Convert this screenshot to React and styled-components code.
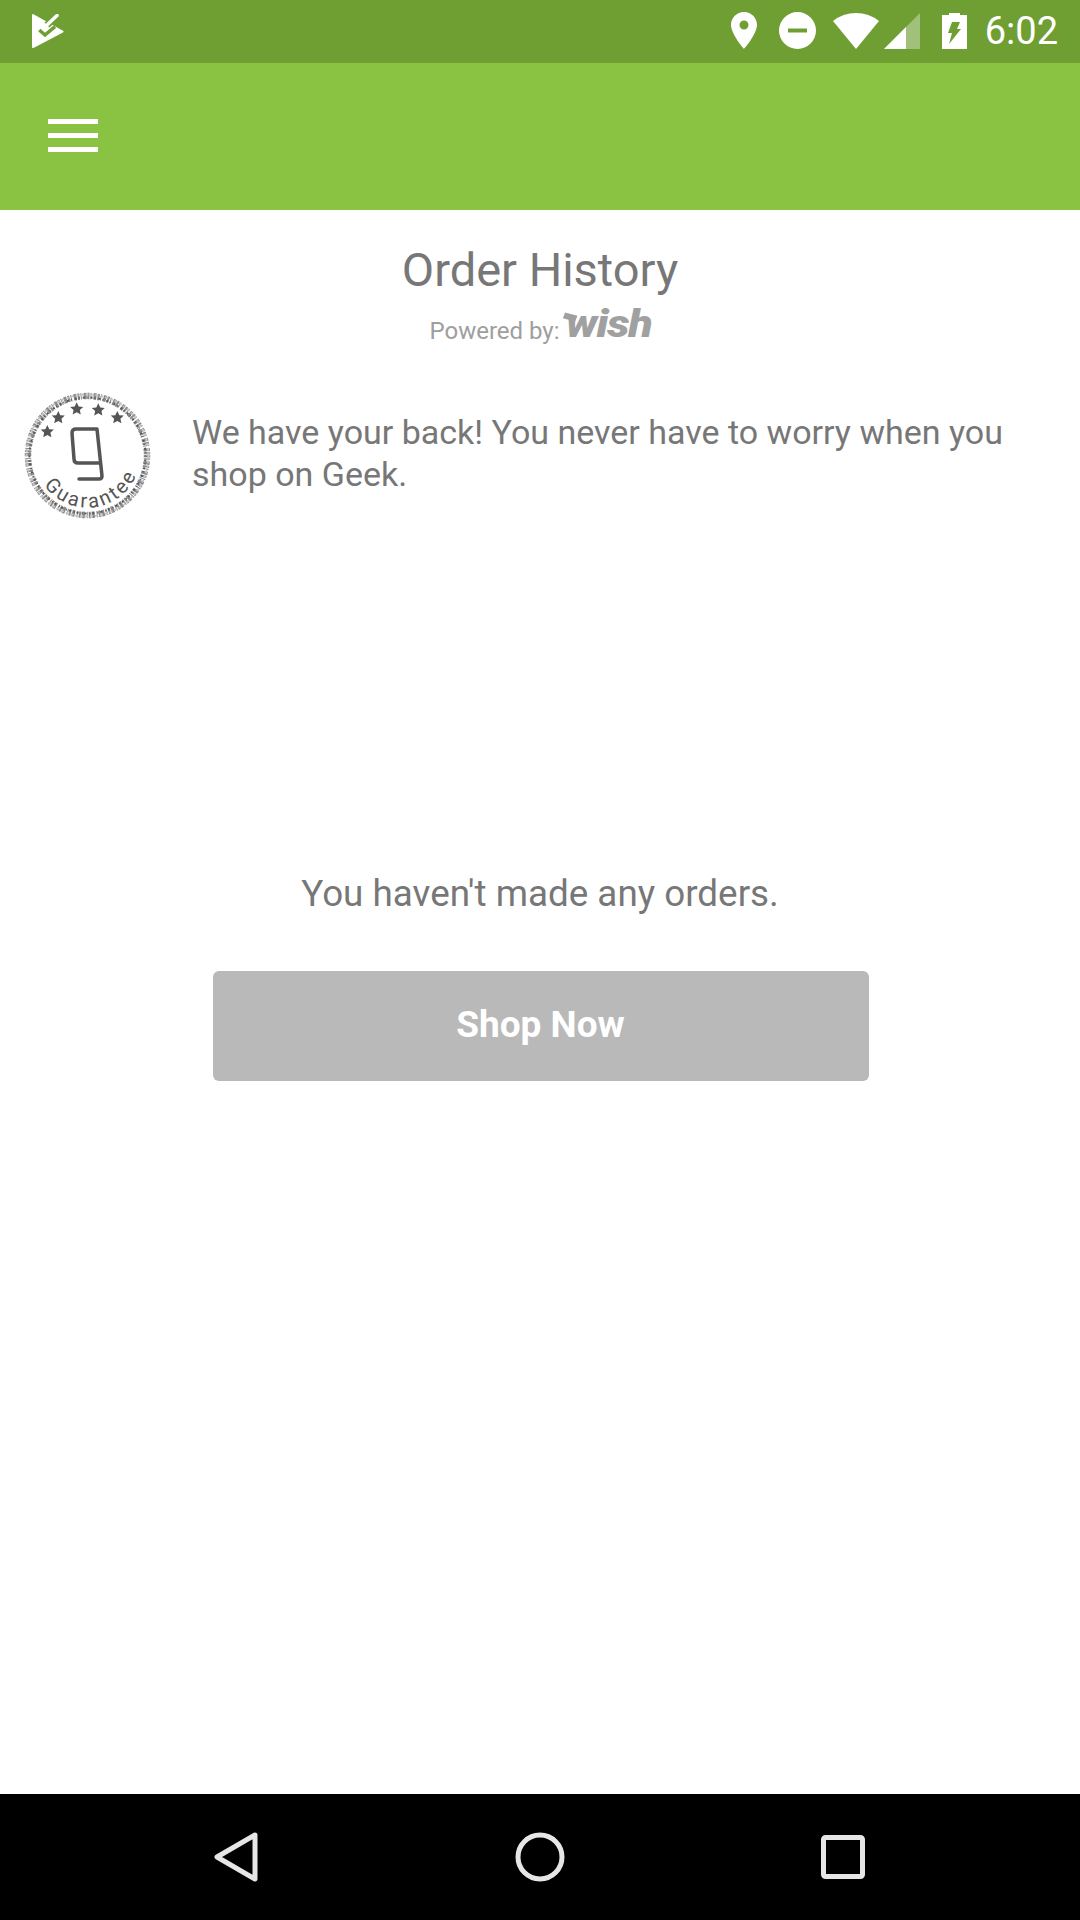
import styled, { createGlobalStyle } from 'styled-components';

const GlobalStyle = createGlobalStyle`
  html, body {
    margin: 0;
    padding: 0;
    background: #fff;
  }
  * {
    box-sizing: border-box;
  }
`;

const StarIcon = ({ x, y }) => (
  <path
    transform={`translate(${x} ${y}) scale(0.68)`}
    d="M0 -10 L2.9 -3.6 L9.6 -3.1 L4.6 1.4 L6 8.2 L0 4.7 L-6 8.2 L-4.6 1.4 L-9.6 -3.1 L-2.9 -3.6 Z"
    fill="#555"
  />
);

const GuaranteeBadge = () => (
  <BadgeSvg viewBox="0 0 128 128">
    <defs>
      <path id="guaranteeArc" d="M 20 93 A 53 53 0 0 0 116 70" />
    </defs>
    <circle cx="63.5" cy="63.5" r="59.5" fill="none" stroke="#8a8a8a" strokeWidth="6.5" strokeDasharray="2 1 1 2 3 1" />
    <circle cx="63.5" cy="63.5" r="58" fill="none" stroke="#555" strokeWidth="2" strokeDasharray="1 3 2 2" />
    <circle cx="63.5" cy="63.5" r="61" fill="none" stroke="#c4c4c4" strokeWidth="2" strokeDasharray="3 2" />
    <StarIcon x={23.3} y={39.7} />
    <StarIcon x={34.3} y={25.7} />
    <StarIcon x={52.7} y={17} />
    <StarIcon x={74.3} y={18} />
    <StarIcon x={93.3} y={25.7} />
    <path
      d="M73 37 H52 Q48 37 48 41 L50 67 Q50 71 54 71 H75 M73 37 L78 84 Q78 87 75 87 H55"
      fill="none"
      stroke="#555"
      strokeWidth="3.5"
      strokeLinecap="round"
      strokeLinejoin="round"
    />
    <text fontFamily="Roboto, sans-serif" fontSize="20" fill="#555" letterSpacing="2.6">
      <textPath href="#guaranteeArc">Guarantee</textPath>
    </text>
  </BadgeSvg>
);

const App = () => {
  return (
    <Screen>
      <GlobalStyle />
      <StatusBar>
        <svg width="32" height="34" viewBox="0 0 32 34">
          <path d="M1 1 L30.5 17.5 L1 33 Z" fill="#fff" stroke="#fff" strokeWidth="2" strokeLinejoin="round" />
          <path d="M7.3 16 L13 21 L23 12.7" fill="none" stroke="#6f9f33" strokeWidth="3.5" />
          <path d="M15 11 L25 1.5" fill="none" stroke="#6f9f33" strokeWidth="7" />
          <path d="M15.5 10.5 L25 1.5" fill="none" stroke="#fff" strokeWidth="3.5" strokeLinecap="round" />
        </svg>
        <StatusRight>
          <svg width="26" height="37" viewBox="0 0 26 37">
            <path
              fillRule="evenodd"
              d="M13 0 C5.8 0 0 5.8 0 13 C0 22 13 37 13 37 C13 37 26 22 26 13 C26 5.8 20.2 0 13 0 Z M13 8.5 A4.5 4.5 0 1 1 13 17.5 A4.5 4.5 0 1 1 13 8.5 Z"
              fill="#fff"
            />
          </svg>
          <StatusGlyph $left={22} width="37" height="37" viewBox="0 0 37 37">
            <path
              fillRule="evenodd"
              d="M18.5 0 A18.5 18.5 0 1 1 18.5 37 A18.5 18.5 0 1 1 18.5 0 Z M9 16.5 V20.5 H28 V16.5 Z"
              fill="#fff"
            />
          </StatusGlyph>
          <StatusGlyph $left={17} width="46" height="36" viewBox="0 0 46 36">
            <path d="M23 36 L0 8 Q10 0 23 0 Q36 0 46 8 Z" fill="#fff" />
          </StatusGlyph>
          <StatusGlyph $left={5} width="36" height="36" viewBox="0 0 36 36">
            <path d="M36 0 V36 H0 Z" fill="#fff" fillOpacity="0.35" />
            <path d="M22 14 V36 H0 Z" fill="#fff" />
          </StatusGlyph>
          <StatusGlyph $left={22} width="25" height="36" viewBox="0 0 25 36">
            <path
              fillRule="evenodd"
              d="M7 2 V0 H18 V2 H25 V36 H0 V2 Z M10 9 H18 L15 16 H19 L7 31 L10 20 H6 Z"
              fill="#fff"
            />
          </StatusGlyph>
          <StatusTime>6:02</StatusTime>
        </StatusRight>
      </StatusBar>

      <AppBar>
        <MenuLine />
        <MenuLine />
        <MenuLine />
      </AppBar>

      <Main>
        <PageTitle>Order History</PageTitle>
        <PoweredRow>
          <PoweredText>Powered by:</PoweredText>
          <WishLogo>wish</WishLogo>
        </PoweredRow>

        <GuaranteeRow>
          <GuaranteeBadge />
          <GuaranteeText>We have your back! You never have to worry when you shop on Geek.</GuaranteeText>
        </GuaranteeRow>

        <EmptyText>You haven't made any orders.</EmptyText>
        <ShopButton>Shop Now</ShopButton>
      </Main>

      <NavBar>
        <svg width="44" height="50" viewBox="0 0 44 50">
          <path d="M41 3 L3 25 L41 47 Z" fill="none" stroke="#e6e6e6" strokeWidth="5" strokeLinejoin="round" />
        </svg>
        <svg width="50" height="50" viewBox="0 0 50 50">
          <circle cx="25" cy="25" r="22" fill="none" stroke="#e6e6e6" strokeWidth="5" />
        </svg>
        <svg width="44" height="44" viewBox="0 0 44 44">
          <rect x="2.5" y="2.5" width="39" height="39" rx="2" fill="none" stroke="#e6e6e6" strokeWidth="5" />
        </svg>
      </NavBar>
    </Screen>
  );
};

export default App;

const Screen = styled.div`
  width: 1080px;
  height: 1920px;
  display: flex;
  flex-direction: column;
  overflow: hidden;
  background: #fff;
  font-family: Roboto, 'Liberation Sans', sans-serif;
`;

const StatusBar = styled.div`
  height: 63px;
  padding: 0 22px 2px 32px;
  display: flex;
  justify-content: space-between;
  align-items: center;
  background: #6f9f33;
`;

const StatusRight = styled.div`
  display: flex;
  align-items: center;
`;

const StatusGlyph = styled.svg`
  margin-left: ${({ $left }) => $left}px;
`;

const StatusTime = styled.span`
  margin-left: 18px;
  color: #fff;
  font-size: 38px;
  line-height: 40px;
`;

const AppBar = styled.div`
  height: 147px;
  padding: 0 0 2px 48px;
  display: flex;
  flex-direction: column;
  justify-content: center;
  gap: 9px;
  background: #8ac341;
`;

const MenuLine = styled.div`
  width: 50px;
  height: 5px;
  background: #fff;
`;

const Main = styled.div`
  flex: 1;
  display: flex;
  flex-direction: column;
  align-items: center;
  padding-top: 35px;
`;

const PageTitle = styled.h1`
  margin: 0;
  color: #777;
  font-size: 47px;
  font-weight: 400;
  line-height: 50px;
`;

const PoweredRow = styled.div`
  height: 44px;
  margin-top: 14px;
  display: flex;
  align-items: center;
  gap: 6px;
`;

const PoweredText = styled.span`
  color: #9e9e9e;
  font-size: 24px;
  line-height: 30px;
`;

const WishLogo = styled.span`
  position: relative;
  width: 85px;
  margin-top: -14px;
  color: #a0a0a0;
  font-size: 38px;
  font-weight: 900;
  font-style: italic;
  line-height: 40px;
  letter-spacing: -1px;
  transform: scaleX(1.18);
  transform-origin: left center;

  /* swash on the w */
  &::before {
    content: '';
    position: absolute;
    top: 10px;
    left: -2px;
    width: 11px;
    height: 6px;
    background: #a0a0a0;
    transform: rotate(18deg);
  }
`;

const GuaranteeRow = styled.div`
  width: 100%;
  margin-top: 39px;
  padding: 0 48px 0 24px;
  display: flex;
  align-items: flex-start;
  gap: 40px;
`;

const BadgeSvg = styled.svg`
  width: 128px;
  height: 128px;
  flex-shrink: 0;
`;

const GuaranteeText = styled.p`
  margin: 19px 0 0;
  color: #777;
  font-size: 34px;
  line-height: 42px;
`;

const EmptyText = styled.p`
  margin: 352px 0 0;
  color: #777;
  font-size: 36.8px;
  line-height: 44px;
`;

const ShopButton = styled.button`
  width: 656px;
  height: 110px;
  margin: 55px 0 0 1px;
  padding: 0 0 4px;
  border: none;
  border-radius: 6px;
  background: #b9b9b9;
  color: #fff;
  font-family: inherit;
  font-size: 37px;
  font-weight: 700;
`;

const NavBar = styled.div`
  height: 126px;
  padding: 0 215px 0 214px;
  display: flex;
  justify-content: space-between;
  align-items: center;
  background: #000;
`;
